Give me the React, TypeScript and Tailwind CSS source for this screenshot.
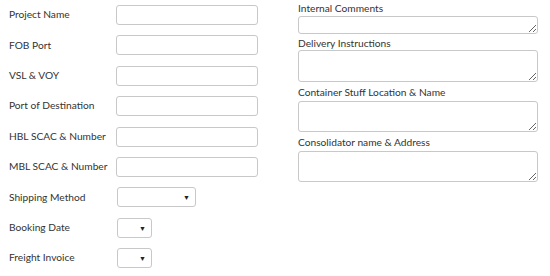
import React from "react";

const font = { fontFamily: 'Lato, "Segoe UI", sans-serif' };

function Arrow() {
  return <span className="pointer-events-none absolute right-[5px] top-1/2 -translate-y-1/2 text-[7px] leading-none text-[#222]">▼</span>;
}

function TextRow({ label }: { label: string }) {
  return (
    <div className="flex h-[20px] items-center">
      <div className="w-[116px] shrink-0 whitespace-nowrap pl-[9px] text-[10.2px] text-[#333]">{label}</div>
      <input className="h-[20px] w-[142px] rounded-[3px] border border-[#c8c8c8] bg-white outline-none" />
    </div>
  );
}

function SelectRow({ label, width }: { label: string; width: string }) {
  return (
    <div className="flex h-[20px] items-center">
      <div className="w-[117px] shrink-0 whitespace-nowrap pl-[9px] text-[10.2px] text-[#333]">{label}</div>
      <div className={`relative h-[20px] ${width} rounded-[3px] border border-[#c8c8c8] bg-white`}>
        <Arrow />
      </div>
    </div>
  );
}

export default function App() {
  return (
    <div className="flex h-[276px] w-[550px] bg-white" style={font}>
      <div className="flex w-[298px] shrink-0 flex-col gap-[10.375px] pt-[5px]">
        <TextRow label="Project Name" />
        <TextRow label="FOB Port" />
        <TextRow label="VSL & VOY" />
        <TextRow label="Port of Destination" />
        <TextRow label="HBL SCAC & Number" />
        <TextRow label="MBL SCAC & Number" />
        <SelectRow label="Shipping Method" width="w-[79px]" />
        <SelectRow label="Booking Date" width="w-[35px]" />
        <SelectRow label="Freight Invoice" width="w-[35px]" />
      </div>
      <div className="flex w-[240px] flex-col pt-[1px] text-[10.2px] text-[#333]">
        <div className="h-[15px] whitespace-nowrap leading-[15px]">Internal Comments</div>
        <textarea className="block h-[18px] w-full resize-y rounded-[3px] border border-[#c8c8c8] outline-none" />
        <div className="mt-[2px] h-[14px] whitespace-nowrap leading-[14px]">Delivery Instructions</div>
        <textarea className="block h-[32px] w-full resize-y rounded-[3px] border border-[#c8c8c8] outline-none" />
        <div className="mt-[3px] h-[16px] whitespace-nowrap leading-[14px]">Container Stuff Location &amp; Name</div>
        <textarea className="block h-[31px] w-full resize-y rounded-[3px] border border-[#c8c8c8] outline-none" />
        <div className="mt-[3px] h-[16px] whitespace-nowrap leading-[14px]">Consolidator name &amp; Address</div>
        <textarea className="block h-[31px] w-full resize-y rounded-[3px] border border-[#c8c8c8] outline-none" />
      </div>
    </div>
  );
}
